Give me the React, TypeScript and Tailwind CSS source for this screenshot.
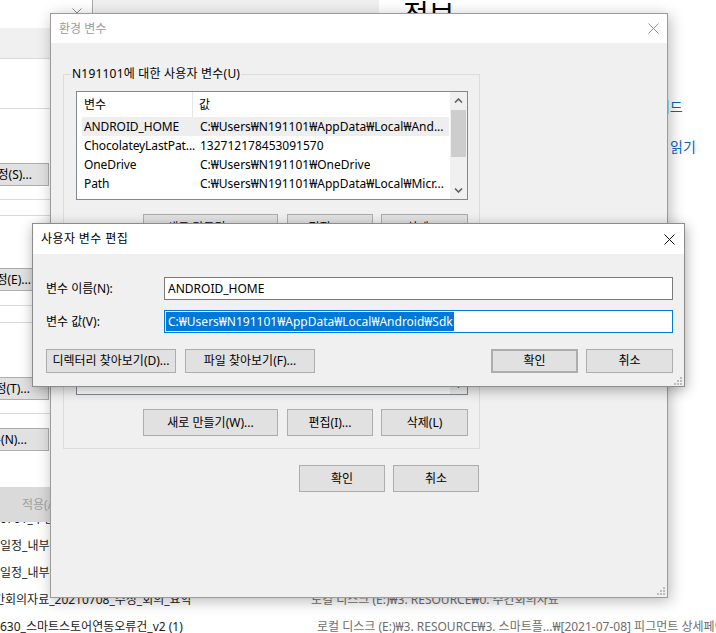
import { ReactNode } from "react";

const FONT = "font-['Noto_Sans','Noto_Sans_CJK_KR',sans-serif]";

const CloseX = ({ color, size }: { color: string; size: number }) => (
  <svg width={size} height={size} viewBox={`0 0 ${size} ${size}`} className="shrink-0">
    <path d={`M0.5 0.5 L${size - 0.5} ${size - 0.5} M${size - 0.5} 0.5 L0.5 ${size - 0.5}`} stroke={color} strokeWidth="1" />
  </svg>
);

const Chevron = ({ up }: { up?: boolean }) => (
  <svg width="9" height="5" viewBox="0 0 9 5">
    <path d={up ? "M1 4.5 L4.5 1 L8 4.5" : "M1 0.5 L4.5 4 L8 0.5"} stroke="#606060" strokeWidth="1.6" fill="none" />
  </svg>
);

const Grip = () => (
  <svg width="8" height="8" viewBox="0 0 8 8">
    {[
      [6, 0],
      [3, 3],
      [6, 3],
      [0, 6],
      [3, 6],
      [6, 6],
    ].map(([x, y]) => (
      <rect key={`${x}-${y}`} x={x} y={y} width="2" height="2" fill="#bcbcbc" />
    ))}
  </svg>
);

const Btn = ({ children, className = "" }: { children: ReactNode; className?: string }) => (
  <div
    className={`flex shrink-0 items-center justify-center whitespace-nowrap border border-[#adadad] bg-[#e1e1e1] text-[12px] leading-none text-black ${className}`}
  >
    {children}
  </div>
);

const rows = [
  ["ANDROID_HOME", "C:₩Users₩N191101₩AppData₩Local₩And..."],
  ["ChocolateyLastPat...", "132712178453091570"],
  ["OneDrive", "C:₩Users₩N191101₩OneDrive"],
  ["Path", "C:₩Users₩N191101₩AppData₩Local₩Micr..."],
];

// left strip of the System Properties dialog peeking out behind
const SysProps = () => (
  <div className="absolute left-0 top-0 flex h-[522px] w-[93px] flex-col overflow-hidden border-r border-[#a8a8a8] bg-white">
    <div className="relative h-[28px] shrink-0">
      <div className="absolute left-[72px] top-[8px]">
        <CloseX color="#8a8a8a" size={10} />
      </div>
    </div>
    <div className="h-[31px] shrink-0 border-b border-[#dadada] bg-[#f0f0f0]" />
    <div className="h-[50px] shrink-0 border-b border-[#dadada]" />
    <div className="h-[91px] shrink-0 border-b border-[#dadada] pt-[54px]">
      <Btn className="h-[23px] w-[49px] justify-end border-l-0 pr-[16px]">설정(S)...</Btn>
    </div>
    <div className="h-[16px] shrink-0 border-b border-[#dadada]" />
    <div className="h-[90px] shrink-0 border-b border-[#dadada] pt-[52px]">
      <Btn className="h-[23px] w-[49px] justify-end border-l-0 pr-[17px]">설정(E)...</Btn>
    </div>
    <div className="h-[17px] shrink-0 border-b border-[#dadada]" />
    <div className="h-[91px] shrink-0 border-b border-[#dadada] pt-[54px]">
      <Btn className="h-[23px] w-[49px] justify-end border-l-0 pr-[18px]">설정(T)...</Btn>
    </div>
    <div className="h-[73px] shrink-0 pt-[14px]">
      <Btn className="h-[23px] w-[49px] justify-end border-l-0 pr-[21px]">환경 변수(N)...</Btn>
    </div>
    <div className="flex flex-1 items-center bg-[#dadada] pl-[22px] text-[12px] text-[#a0a0a0]">
      적용(A)
    </div>
  </div>
);

const ListRows = () => (
  <div className="flex min-w-0 flex-1 flex-col">
    <div className="flex h-[25px] shrink-0 items-center text-[12px]">
      <div className="flex h-full w-[116px] items-center border-r border-[#e5e5e5] pl-[7px]">변수</div>
      <div className="pl-[6px]">값</div>
    </div>
    {rows.map(([name, value], i) => (
      <div
        key={name}
        className={`ml-[5px] flex h-[19px] shrink-0 items-center whitespace-nowrap text-[12px] ${i === 0 ? "bg-[#eeeeee]" : ""}`}
      >
        <div className="w-[111px] shrink-0 pl-[2px] tracking-[-0.1px]">{name}</div>
        <div className="overflow-hidden pl-[7px]">{value}</div>
      </div>
    ))}
  </div>
);

const EnvWindow = () => (
  <div className="absolute left-[50px] top-[13px] flex h-[585px] w-[618px] flex-col border border-[#9b9b9b] bg-[#f0f0f0] shadow-[2px_3px_14px_rgba(0,0,0,0.28)]">
    <div className="flex h-[29px] shrink-0 items-center justify-between bg-white pl-[8px] pr-[8px]">
      <span className="text-[12px] text-[#9c9c9c]">환경 변수</span>
      <CloseX color="#8f8f8f" size={11} />
    </div>
    <div className="flex flex-1 flex-col pl-[12px] pt-[31px]">
      <div className="relative h-[375px] w-[417px] border border-[#dcdcdc] pl-[12px] pt-[16px]">
        <span className="absolute -top-[9px] left-[7px] bg-[#f0f0f0] px-[1px] text-[12px] leading-[16px] tracking-[0.2px] text-black">
          N191101에 대한 사용자 변수(U)
        </span>
        <div className="flex h-[109px] w-[392px] overflow-hidden border border-[#828790] bg-white text-black">
          <ListRows />
          <div className="ml-[1px] flex w-[17px] shrink-0 flex-col bg-[#f0f0f0]">
            <div className="flex h-[17px] shrink-0 items-center justify-center">
              <Chevron up />
            </div>
            <div className="mx-[1px] mt-[1px] h-[47px] bg-[#cdcdcd]" />
            <div className="flex-1" />
            <div className="flex h-[17px] shrink-0 items-center justify-center">
              <Chevron />
            </div>
          </div>
        </div>
        <div className="mt-[14px] flex w-[392px] justify-end gap-[8px]">
          <Btn className="mr-[1px] h-[27px] w-[135px]">새로 만들기(W)...</Btn>
          <Btn className="h-[27px] w-[86px]">편집(I)...</Btn>
          <Btn className="h-[27px] w-[87px]">삭제(L)</Btn>
        </div>
        <div className="flex h-[154px] w-[392px] justify-end border-x border-b border-[#828790] bg-white">
          <div className="flex w-[17px] flex-col justify-end bg-[#f0f0f0]">
            <div className="flex h-[17px] items-center justify-center">
              <Chevron />
            </div>
          </div>
        </div>
        <div className="mt-[14px] flex w-[392px] justify-end gap-[8px]">
          <Btn className="mr-[1px] h-[27px] w-[135px]">새로 만들기(W)...</Btn>
          <Btn className="h-[27px] w-[86px]">편집(I)...</Btn>
          <Btn className="h-[27px] w-[87px]">삭제(L)</Btn>
        </div>
      </div>
      <div className="mt-[16px] flex w-[416px] justify-end gap-[8px]">
        <Btn className="h-[27px] w-[86px]">확인</Btn>
        <Btn className="h-[27px] w-[86px]">취소</Btn>
      </div>
    </div>
    <div className="absolute bottom-[2px] right-[2px]">
      <Grip />
    </div>
  </div>
);

const EditDialog = () => (
  <div className="absolute left-[32px] top-[223px] flex h-[164px] w-[653px] flex-col border border-[#8c8c8c] bg-[#f0f0f0] text-[12px] text-black shadow-[1px_3px_12px_rgba(0,0,0,0.32)]">
    <div className="flex h-[30px] shrink-0 items-center justify-between bg-white pl-[8px] pr-[9px]">
      <span className="tracking-[0.4px]">사용자 변수 편집</span>
      <CloseX color="#111111" size={11} />
    </div>
    <div className="flex flex-1 flex-col pl-[13px] pr-[11px] pt-[23px]">
      <div className="flex h-[23px] items-center">
        <div className="w-[118px] shrink-0">변수 이름(N):</div>
        <div className="flex h-full flex-1 items-center border border-[#7a7a7a] bg-white pl-[3px]">ANDROID_HOME</div>
      </div>
      <div className="mt-[10px] flex h-[23px] items-center">
        <div className="w-[118px] shrink-0">변수 값(V):</div>
        <div className="flex h-full flex-1 items-center border border-[#0078d7] bg-white pl-[1px]">
          <span className="whitespace-nowrap bg-[#0078d7] pl-[2px] pr-[1px] leading-[19px] text-white">
            C:₩Users₩N191101₩AppData₩Local₩Android₩Sdk
          </span>
        </div>
      </div>
      <div className="mt-[16px] flex h-[24px] items-stretch">
        <Btn className="w-[130px]">디렉터리 찾아보기(D)...</Btn>
        <Btn className="ml-[9px] w-[130px]">파일 찾아보기(F)...</Btn>
        <div className="flex-1" />
        <Btn className="w-[87px] border-2 border-[#0078d7]">확인</Btn>
        <Btn className="ml-[8px] w-[87px]">취소</Btn>
      </div>
    </div>
    <div className="absolute bottom-[1px] right-[2px]">
      <Grip />
    </div>
  </div>
);

const explorerRows = [
  { name: "0701_주간보고_일정공유", loc: "", shift: "" },
  { name: "일정_내부공유.xlsx", loc: "", shift: "" },
  { name: "일정_내부공유(1).xlsx", loc: "", shift: "" },
  { name: "간회의자료_20210708_수정_회의_요약", loc: "로컬 디스크 (E:)₩3. RESOURCE₩0. 주간회의자료", shift: "-ml-[6px]" },
  {
    name: "630_스마트스토어연동오류건_v2 (1)",
    loc: "로컬 디스크 (E:)₩3. RESOURCE₩3. 스마트플...₩[2021-07-08] 피그먼트 상세페이지",
    shift: "",
  },
];

export default function App() {
  return (
    <div className={`relative h-[633px] w-[716px] overflow-hidden bg-white ${FONT}`}>
      {/* settings window behind */}
      <div className="absolute left-[92px] top-0 flex h-full w-[624px]">
        <div className="h-full w-[287px] shrink-0 bg-[#f0f0f0]" />
        <div className="relative flex-1">
          <div className="absolute left-[24px] top-[-6px] whitespace-nowrap text-[28px] leading-[40px] text-black">정보</div>
          <div className="absolute left-[265px] top-[96px] whitespace-nowrap text-[14px] leading-[22px] text-[#0067c0]">
            가이드
          </div>
          <div className="absolute left-[291px] top-[136px] whitespace-nowrap text-[14px] leading-[22px] text-[#0067c0]">
            읽기
          </div>
        </div>
      </div>

      {/* explorer file list, scrolled so the first row is cut at the top */}
      <div className="absolute bottom-0 left-0 top-[522px] w-full overflow-hidden bg-white">
        <div className="-mt-[17px] flex flex-col">
          {explorerRows.map((r) => (
            <div key={r.name} className="flex h-[27px] items-center whitespace-nowrap text-[12px]">
              <div className={`w-[317px] shrink-0 overflow-hidden text-[#1a1a1a] ${r.shift}`}>{r.name}</div>
              <div className="text-[#6d6d6d]">{r.loc}</div>
            </div>
          ))}
        </div>
      </div>

      <SysProps />
      <EnvWindow />
      <EditDialog />
    </div>
  );
}
